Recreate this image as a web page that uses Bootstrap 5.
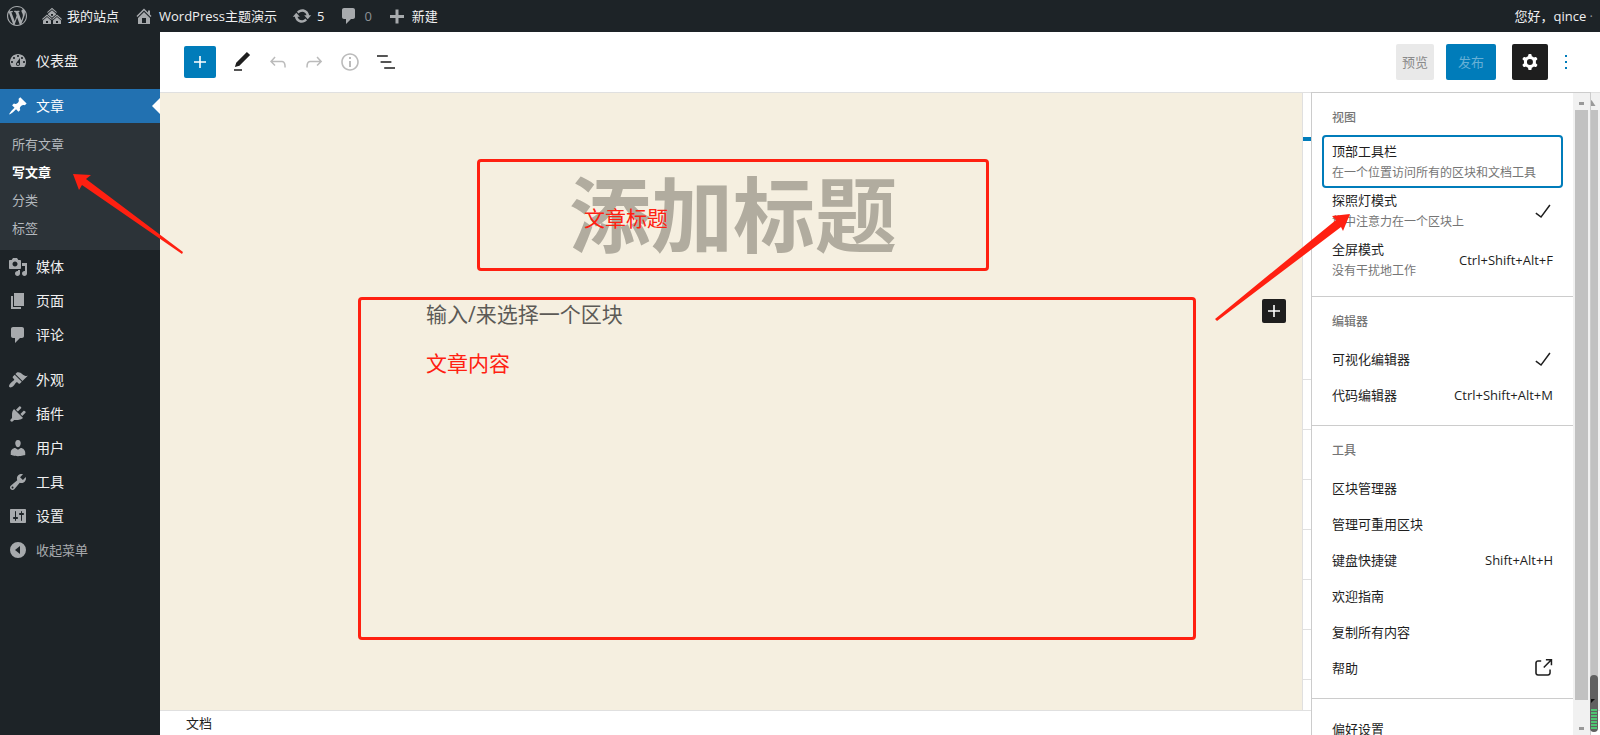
<!DOCTYPE html>
<html lang="zh-CN">
<head>
<meta charset="utf-8">
<meta name="viewport" content="width=device-width, initial-scale=1">
<title>写文章 ‹ WordPress主题演示</title>
<link rel="stylesheet" href="https://cdn.jsdelivr.net/npm/bootstrap@5.3.0/dist/css/bootstrap.min.css">
<style>
  :root { --wp-blue: #007cba; --ink: #1e1e1e; --bar: #1d2327; --canvas: #f5efe0; --red: #ff2011; }
  body { font: 13px/20px "Open Sans", "Noto Sans CJK SC", sans-serif; color: var(--ink); overflow: hidden; }
  a { color: inherit; text-decoration: none; }
  button, input { font: inherit; color: inherit; border: 0; background: none; padding: 0; }
  svg { fill: currentColor; flex: none; display: block; }
  .admin-bar { height: 32px; background: var(--bar); color: #f0f0f1; padding: 0 7px; }
  .admin-bar svg { color: #a7aaad; }
  .bar-item { display: flex; align-items: center; gap: 5px; margin-left: 15px; }
  .dim { color: #8c9196; }
  .admin-menu { width: 160px; background: var(--bar); color: #f0f0f1; padding-top: 12px; font-size: 14px; }
  .menu-row { height: 34px; padding-left: 8px; gap: 8px; }
  .menu-row svg { color: #a7aaad; }
  .menu-gap { height: 11px; }
  .menu-row.current { background: #2271b1; color: #fff; }
  .menu-row.current svg { color: #fff; }
  .menu-row.current::after { content: ""; position: absolute; right: 0; top: 9px; border: 8px solid transparent; border-left: 0; border-right-color: #fff; }
  .menu-row.collapse-row { font-size: 13px; color: #a7aaad; }
  .submenu { background: #2c3338; padding: 7px 12px 8px; font-size: 13px; line-height: 28px; color: #b4b9be; }
  .editor-head { height: 61px; border-bottom: 1px solid #e0e0e0; padding: 0 22px 0 24px; }
  .inserter { width: 32px; height: 32px; background: var(--wp-blue); color: #fff; border-radius: 2px; }
  .tool-btn { width: 36px; height: 36px; border-radius: 2px; }
  .tool-btn:disabled { color: #bbb; }
  .tool-btn.pressed { background: var(--ink); color: #fff; }
  .btn-preview { width: 38px; height: 36px; background: #e9e9e9; color: #8a8a8a; border-radius: 2px; }
  .btn-publish { width: 50px; height: 36px; margin: 0 16px 0 12px; background: var(--wp-blue); color: #66b0d6; border-radius: 2px; }
  .btn-more { color: var(--wp-blue); margin-left: 6px; }
  .fill-rest { min-width: 0; min-height: 0; }
  .canvas { background: var(--canvas); padding: 66px 0 0 4px; }
  .marked { border: 3px solid var(--red); border-radius: 4px; }
  .title-mark { width: 512px; height: 112px; }
  .title-input { font-size: 82px; font-weight: 700; line-height: 104px; height: 104px; }
  .title-input::placeholder { color: #b1ac9f; opacity: 1; }
  .note { color: var(--red); font-size: 21px; line-height: 28px; }
  .title-note { left: 104px; top: 42px; }
  .body-mark { height: 343px; margin: 26px 106px 0 194px; padding-left: 65px; }
  .body-input { font-size: 21px; line-height: 28px; height: 28px; }
  .body-input::placeholder { color: #5c5a56; opacity: 1; }
  .body-note { margin-top: 21px; }
  .side-inserter { width: 24px; height: 24px; right: 16px; top: 206px; background: var(--ink); color: #fff; border-radius: 2px; }
  .settings { width: 298px; border-left: 1px solid #e0e0e0; }
  .settings-tab { height: 48px; border-bottom: 4px solid var(--wp-blue); }
  .settings-panel { height: 50px; border-bottom: 1px solid #e0e0e0; }
  .settings-panel.tall { height: 239px; }
  .editor-foot { height: 25px; border-top: 1px solid #e0e0e0; padding-left: 26px; }
  .options { right: 9px; top: 0; bottom: 0; width: 280px; margin-top: -1px; border: 1px solid #ccc; border-bottom: 0; background: #fff; }
  .options section { border-bottom: 1px solid #ccc; padding: 0 12px 12px; }
  .options section.last { padding-top: 12px; border: 0; }
  .options h2 { font-size: 12px; line-height: 20px; color: #757575; height: 44px; margin: 0; padding: 15px 8px 0; }
  .opt { height: 36px; padding: 0 8px; width: 100%; text-align: left; }
  .opt.two { height: 49px; }
  .opt small { display: block; font-size: 12px; color: #757575; margin-top: 2px; }
  .opt svg { margin-right: -2px; }
  .opt.focus { outline: 2px solid var(--wp-blue); border-radius: 2px; }
  .scroller { width: 17px; background: #f1f1f1; padding: 0 2px; }
  .scroller i { display: block; height: 17px; padding-top: 9px; }
  .scroller i::before { content: ""; display: block; margin: 0 auto; width: 5px; height: 3px; background: #999; }
  .scroller i.up::before { width: 8px; height: 6px; margin-top: -2px; clip-path: polygon(50% 0, 100% 100%, 0 100%); }
  .thumb { background: #c1c1c1; height: 97%; }
  .overlay-arrow { pointer-events: none; color: var(--red); z-index: 5; }
  .arrow-menu { left: 73px; top: 174px; }
  .arrow-option { right: 249px; top: 214px; }
  .meter { right: 2px; bottom: 3px; width: 8px; height: 57px; border-radius: 4px; background: #606060; z-index: 6; overflow: hidden; }
  .meter::after { content: ""; position: absolute; inset: 34px 1px 2px; background: repeating-linear-gradient(#4fc473 0 2px, #606060 2px 3px); }
  .meter::before { content: ""; position: absolute; left: 1px; top: 24px; border: 2px solid transparent; border-top-color: #111; border-left-color: #111; }
</style>
</head>
<body class="vh-100 d-flex flex-column position-relative">
<header class="admin-bar d-flex align-items-center flex-shrink-0">
  <a href="#" aria-label="WordPress"><svg width="20" height="20" viewBox="0 0 20 20"><path d="M20 10c0-5.510-4.490-10-10-10C4.480 0 0 4.490 0 10c0 5.520 4.480 10 10 10 5.510 0 10-4.480 10-10zM7.780 15.370L4.370 6.220c.55-.02 1.170-.08 1.170-.08.5-.06.44-1.130-.06-1.110 0 0-1.450.11-2.370.11-.18 0-.37 0-.58-.01C4.120 2.690 6.870 1.110 10 1.110c2.330 0 4.450.87 6.050 2.340-.68-.11-1.650.39-1.650 1.580 0 .74.45 1.360.9 2.100.35.61.55 1.360.55 2.460 0 1.490-1.400 5-1.400 5l-3.030-8.370c.54-.02.82-.17.82-.17.5-.05.44-1.250-.06-1.220 0 0-1.440.12-2.380.12-.87 0-2.330-.12-2.330-.12-.5-.03-.56 1.200-.06 1.220l.92.08 1.260 3.410zM17.410 10c.24-.64.74-1.870.43-4.250.7 1.290 1.050 2.710 1.050 4.250 0 3.290-1.730 6.240-4.400 7.780.97-2.590 1.940-5.200 2.920-7.780zM6.100 18.090C3.120 16.650 1.110 13.530 1.110 10c0-1.300.23-2.480.72-3.590C3.250 10.300 4.670 14.200 6.100 18.090zm4.030-6.630l2.580 6.980c-.86.29-1.760.45-2.710.45-.79 0-1.570-.11-2.290-.33.81-2.380 1.620-4.740 2.420-7.100z"/></svg></a>
  <a href="#" class="bar-item"><svg width="20" height="20" viewBox="0 0 20 20"><path d="M14.270 6.870L10 3.140 5.730 6.870 5 6.140l5-4.380 5 4.380zM14 8.420l-4.050 3.430L6 8.380v-.74l4-3.500 4 3.500v.78zM11 9.700V8H9v1.700h2zm-1.730 4.030L5 10 .73 13.730 0 13l5-4.380L10 13zm10 0L15 10l-4.270 3.730L10 13l5-4.380L20 13zM5 11l4 3.500V18H1v-3.500zm10 0l4 3.500V18h-8v-3.500zm-9 6v-2H4v2h2zm10 0v-2h-2v2h2z"/></svg>我的站点</a>
  <a href="#" class="bar-item"><svg width="20" height="20" viewBox="0 0 20 20"><path d="M16 8.500l1.530 1.530-1.060 1.060L10 4.600l-6.470 6.490-1.060-1.060L10 2.500l4 4v-2h2v4zm-6-2.460l6 5.990V18H4v-5.970zM12 17v-5H8v5h4z"/></svg>WordPress主题演示</a>
  <a href="#" class="bar-item"><svg width="20" height="20" viewBox="0 0 20 20"><path d="M10.200 3.280c3.530 0 6.430 2.610 6.920 6h2.080l-3.500 4-3.500-4h2.320c-.45-1.970-2.210-3.450-4.320-3.450-1.450 0-2.730.71-3.540 1.780L4.950 5.660C6.230 4.200 8.110 3.280 10.200 3.280zm-.4 13.440c-3.520 0-6.430-2.610-6.920-6H.8l3.500-4c1.170 1.330 2.330 2.670 3.500 4H5.480c.45 1.970 2.210 3.450 4.320 3.450 1.450 0 2.730-.71 3.540-1.780l1.710 1.950c-1.280 1.460-3.150 2.380-5.250 2.380z"/></svg>5</a>
  <a href="#" class="bar-item dim"><svg width="20" height="20" viewBox="0 0 20 20"><path d="M5 2h9c1.100 0 2 .9 2 2v7c0 1.100-.9 2-2 2h-2l-5 5v-5H5c-1.100 0-2-.9-2-2V4c0-1.100.9-2 2-2z"/></svg>0</a>
  <a href="#" class="bar-item"><svg width="20" height="20" viewBox="0 0 20 20"><path d="M17 9v3h-5.500v5.500h-3V12H3V9h5.500V3.500h3V9z"/></svg>新建</a>
  <a href="#" class="ms-auto">您好，qince <span class="dim">·</span></a>
</header>

<div class="d-flex flex-grow-1 fill-rest">
  <nav class="admin-menu flex-shrink-0" aria-label="主菜单">
    <a href="#" class="menu-row d-flex align-items-center"><svg width="20" height="20" viewBox="0 0 20 20"><path d="M3.760 16h12.480c1.100-1.370 1.760-3.110 1.760-5 0-4.420-3.580-8-8-8s-8 3.580-8 8c0 1.890.66 3.630 1.760 5zM10 4c.55 0 1 .45 1 1s-.45 1-1 1-1-.45-1-1 .45-1 1-1zM6 6c.55 0 1 .45 1 1s-.45 1-1 1-1-.45-1-1 .45-1 1-1zm8 0c.55 0 1 .45 1 1s-.45 1-1 1-1-.45-1-1 .45-1 1-1zm-5.370 5.550L12 7v6c0 1.100-.9 2-2 2s-2-.9-2-2c0-.57.24-1.080.63-1.450zM4 10c.55 0 1 .45 1 1s-.45 1-1 1-1-.45-1-1 .45-1 1-1zm12 0c.55 0 1 .45 1 1s-.45 1-1 1-1-.45-1-1 .45-1 1-1zm-5 3c0-.55-.45-1-1-1s-1 .45-1 1 .45 1 1 1 1-.45 1-1z"/></svg>仪表盘</a>
    <div class="menu-gap"></div>
    <a href="#" class="menu-row current position-relative d-flex align-items-center"><svg width="20" height="20" viewBox="0 0 20 20"><path d="M10.440 3.020l1.820-1.820 6.360 6.350-1.830 1.820c-1.050-.68-2.480-.57-3.410.36l-.75.75c-.92.93-1.040 2.350-.35 3.410l-1.830 1.820-2.410-2.410-2.800 2.790c-.42.42-3.380 2.710-3.800 2.290s1.860-3.390 2.280-3.810l2.790-2.790L4.100 9.360l1.830-1.820c1.050.69 2.480.57 3.400-.36l.75-.75c.93-.92 1.050-2.350.36-3.410z"/></svg>文章</a>
    <div class="submenu d-flex flex-column">
      <a href="#">所有文章</a><a href="#" class="fw-bold text-white">写文章</a><a href="#">分类</a><a href="#">标签</a>
    </div>
    <a href="#" class="menu-row d-flex align-items-center"><svg width="20" height="20" viewBox="0 0 20 20"><path d="M13 11V4c0-.55-.45-1-1-1h-1.670L9 1H5L3.670 3H2c-.55 0-1 .45-1 1v7c0 .55.45 1 1 1h10c.55 0 1-.45 1-1zM7 4.500c1.380 0 2.500 1.120 2.500 2.500S8.380 9.500 7 9.500 4.500 8.380 4.500 7 5.620 4.500 7 4.500zM14 6h5v10.500c0 1.380-1.120 2.500-2.500 2.500S14 17.880 14 16.500s1.120-2.500 2.500-2.500c.17 0 .34.02.5.05V9h-3V6zm-4 8.050V13h2v3.500c0 1.380-1.120 2.500-2.500 2.500S7 17.880 7 16.500 8.120 14 9.500 14c.17 0 .34.02.5.05z"/></svg>媒体</a>
    <a href="#" class="menu-row d-flex align-items-center"><svg width="20" height="20" viewBox="0 0 20 20"><path d="M6 15V2h10v13H6zm-1 1h8v2H3V5h2v11z"/></svg>页面</a>
    <a href="#" class="menu-row d-flex align-items-center"><svg width="20" height="20" viewBox="0 0 20 20"><path d="M5 2h9c1.100 0 2 .9 2 2v7c0 1.100-.9 2-2 2h-2l-5 5v-5H5c-1.100 0-2-.9-2-2V4c0-1.100.9-2 2-2z"/></svg>评论</a>
    <div class="menu-gap"></div>
    <a href="#" class="menu-row d-flex align-items-center"><svg width="20" height="20" viewBox="0 0 20 20"><path d="M14.480 11.060L7.410 3.990l1.500-1.500c.5-.56 2.300-.47 3.510.32 1.210.8 1.430 1.280 2.910 2.100 1.180.64 2.450 1.260 4.450.85zm-.71.71L6.700 4.700 4.930 6.470c-.39.39-.39 1.020 0 1.410l1.060 1.060c.39.39.39 1.030 0 1.420-.6.6-1.430 1.110-2.210 1.690-.35.26-.7.53-1.010.84C1.430 14.230.4 16.080 1.400 17.070c.99 1 2.840-.03 4.180-1.360.31-.31.58-.66.85-1.020.57-.78 1.080-1.610 1.690-2.210.39-.39 1.020-.39 1.410 0l1.060 1.060c.39.39 1.020.39 1.410 0z"/></svg>外观</a>
    <a href="#" class="menu-row d-flex align-items-center"><svg width="20" height="20" viewBox="0 0 20 20"><path d="M13.110 4.360L9.870 7.600 8 5.730l3.240-3.240c.35-.34 1.050-.2 1.560.32.52.51.66 1.210.31 1.550zm-8 1.770l.91-1.120 9.010 9.010-1.190.84c-.71.71-2.630 1.160-3.820 1.160H6.140L4.900 17.260c-.59.59-1.540.59-2.120 0-.59-.58-.59-1.530 0-2.120l1.240-1.240v-3.880c0-1.130.4-3.190 1.090-3.890zm7.260 3.970l3.240-3.240c.34-.35 1.040-.21 1.550.31.52.51.66 1.210.31 1.550l-3.240 3.250z"/></svg>插件</a>
    <a href="#" class="menu-row d-flex align-items-center"><svg width="20" height="20" viewBox="0 0 20 20"><path d="M10 9.250c-2.270 0-2.730-3.440-2.730-3.440C7 4.020 7.820 2 9.970 2c2.160 0 2.980 2.020 2.710 3.810 0 0-.41 3.440-2.680 3.440zm0 2.570L12.720 10c2.390 0 4.520 2.330 4.520 4.530v2.490s-3.650 1.130-7.240 1.130c-3.650 0-7.240-1.130-7.240-1.130v-2.490c0-2.250 1.940-4.480 4.470-4.480z"/></svg>用户</a>
    <a href="#" class="menu-row d-flex align-items-center"><svg width="20" height="20" viewBox="0 0 20 20"><path d="M16.680 9.770c-1.340 1.340-3.300 1.670-4.950.99l-5.410 6.520c-.99.99-2.590.99-3.580 0s-.99-2.590 0-3.570l6.520-5.420c-.68-1.650-.35-3.610.99-4.950 1.280-1.280 3.120-1.620 4.720-1.060l-2.890 2.890 2.820 2.820 2.860-2.870c.53 1.580.18 3.390-1.080 4.650zM3.810 16.210c.4.39 1.040.39 1.430 0 .4-.4.4-1.040 0-1.430-.39-.4-1.030-.4-1.430 0-.39.39-.39 1.030 0 1.430z"/></svg>工具</a>
    <a href="#" class="menu-row d-flex align-items-center"><svg width="20" height="20" viewBox="0 0 20 20"><path d="M18 16V4c0-.55-.45-1-1-1H3c-.55 0-1 .45-1 1v12c0 .55.45 1 1 1h14c.55 0 1-.45 1-1zM8 11h1c.55 0 1 .45 1 1s-.45 1-1 1H8v1.500c0 .28-.22.5-.5.5s-.5-.22-.5-.5V13H6c-.55 0-1-.45-1-1s.45-1 1-1h1V5.500c0-.28.22-.5.5-.5s.5.22.5.5V11zm5-2h-1c-.55 0-1-.45-1-1s.45-1 1-1h1V5.500c0-.28.22-.5.5-.5s.5.22.5.5V7h1c.55 0 1 .45 1 1s-.45 1-1 1h-1v5.500c0 .28-.22.5-.5.5s-.5-.22-.5-.5V9z"/></svg>设置</a>
    <button type="button" class="menu-row collapse-row d-flex align-items-center"><svg width="20" height="20" viewBox="0 0 20 20"><path fill-rule="evenodd" d="M10 2a8 8 0 1 0 0 16 8 8 0 0 0 0-16zm2 12-5-4 5-4z"/></svg>收起菜单</button>
  </nav>

  <div class="d-flex flex-column flex-grow-1 bg-white fill-rest">
    <div class="editor-head d-flex align-items-center flex-shrink-0">
      <button type="button" class="inserter d-flex align-items-center justify-content-center me-2" aria-label="添加区块"><svg width="24" height="24" viewBox="0 0 24 24"><path d="M18 11.200h-5.200V6h-1.600v5.200H6v1.600h5.200V18h1.600v-5.200H18z"/></svg></button>
      <button type="button" class="tool-btn d-flex align-items-center justify-content-center" aria-label="编辑"><svg width="24" height="24" viewBox="0 0 24 24"><path d="M20.100 5.100L16.900 2 6.200 12.700l-1.300 4.400 4.500-1.300L20.100 5.100zM4 20.800h8v-1.500H4v1.500z"/></svg></button>
      <button type="button" disabled class="tool-btn d-flex align-items-center justify-content-center" aria-label="撤销"><svg width="24" height="24" viewBox="0 0 24 24"><path d="M18.300 11.700c-.6-.6-1.400-.9-2.300-.9H6.700l2.900-3.300-1.100-1-4.500 5L8.500 16l1-1-2.700-2.700H16c.5 0 .9.2 1.300.5 1 1 1 3.400 1 4.500v.3h1.500v-.2c0-1.500 0-4.300-1.500-5.700z"/></svg></button>
      <button type="button" disabled class="tool-btn d-flex align-items-center justify-content-center" aria-label="重做"><svg width="24" height="24" viewBox="0 0 24 24"><path d="M15.600 6.500l-1.100 1 2.900 3.300H8c-.9 0-1.700.3-2.300.9-1.400 1.500-1.400 4.200-1.400 5.600v.2h1.500v-.3c0-1.100 0-3.500 1-4.500.3-.3.7-.5 1.300-.5h9.200L14.500 15l1.100 1.100 4.600-4.600-4.600-5z"/></svg></button>
      <button type="button" disabled class="tool-btn d-flex align-items-center justify-content-center" aria-label="详情"><svg width="24" height="24" viewBox="0 0 24 24"><path d="M12 3.200c-4.800 0-8.800 3.900-8.800 8.800 0 4.800 3.900 8.800 8.800 8.800 4.800 0 8.800-3.900 8.800-8.800 0-4.800-4-8.800-8.800-8.800zm0 16c-4 0-7.200-3.300-7.200-7.200C4.800 8 8 4.800 12 4.800s7.200 3.300 7.200 7.200c0 4-3.200 7.200-7.200 7.200zM11 17h2v-6h-2v6zm0-8h2V7h-2v2z"/></svg></button>
      <button type="button" class="tool-btn d-flex align-items-center justify-content-center" aria-label="列表视图"><svg width="24" height="24" viewBox="0 0 24 24"><path d="M13.800 5.200H3v1.500h10.800V5.200zm-3.600 12v1.500H21v-1.500H10.200zm7.200-6H6.600v1.500h10.800v-1.500z"/></svg></button>
      <button type="button" class="btn-preview ms-auto">预览</button>
      <button type="button" class="btn-publish">发布</button>
      <button type="button" class="tool-btn pressed d-flex align-items-center justify-content-center" aria-label="设置"><svg width="24" height="24" viewBox="0 0 24 24"><path fill-rule="evenodd" d="M10.289 4.836A1 1 0 0111.275 4h1.306a1 1 0 01.987.836l.244 1.466c.787.26 1.503.679 2.108 1.218l1.393-.522a1 1 0 011.216.437l.653 1.130a1 1 0 01-.23 1.273l-1.148.944a6.025 6.025 0 010 2.435l1.149.946a1 1 0 01.23 1.272l-.653 1.130a1 1 0 01-1.216.437l-1.394-.522c-.605.54-1.320.958-2.108 1.218l-.244 1.466a1 1 0 01-.987.836h-1.306a1 1 0 01-.986-.836l-.244-1.466a5.995 5.995 0 01-2.108-1.218l-1.394.522a1 1 0 01-1.217-.436l-.653-1.131a1 1 0 01.23-1.272l1.149-.946a6.026 6.026 0 010-2.435l-1.148-.944a1 1 0 01-.23-1.272l.653-1.131a1 1 0 011.217-.437l1.393.522a5.994 5.994 0 012.108-1.218l.244-1.466zM14.929 12a3 3 0 11-6 0 3 3 0 016 0z"/></svg></button>
      <button type="button" class="btn-more" aria-label="选项"><svg width="24" height="24" viewBox="0 0 24 24"><path d="M11 5h2v2h-2zM11 11h2v2h-2zM11 17h2v2h-2z"/></svg></button>
    </div>

    <div class="position-relative d-flex flex-column flex-grow-1 fill-rest">
      <div class="d-flex flex-grow-1 fill-rest">
        <main class="canvas position-relative flex-grow-1 overflow-hidden">
          <div class="marked title-mark position-relative mx-auto">
            <input class="title-input w-100 text-center" type="text" placeholder="添加标题" aria-label="添加标题">
            <span class="note title-note position-absolute">文章标题</span>
          </div>
          <div class="marked body-mark">
            <input class="body-input w-75 d-block" type="text" placeholder="输入/来选择一个区块" aria-label="区块">
            <div class="note body-note">文章内容</div>
          </div>
          <button type="button" class="side-inserter position-absolute" aria-label="添加区块"><svg width="24" height="24" viewBox="0 0 24 24"><path d="M18 11.200h-5.200V6h-1.600v5.200H6v1.600h5.200V18h1.600v-5.200H18z"/></svg></button>
        </main>
        <aside class="settings d-flex flex-shrink-0 overflow-hidden" aria-label="文章设置">
          <div class="flex-grow-1">
            <div class="settings-tab"></div><div class="settings-panel tall"></div>
            <div class="settings-panel"></div><div class="settings-panel"></div><div class="settings-panel"></div>
            <div class="settings-panel"></div><div class="settings-panel"></div><div class="settings-panel"></div>
          </div>
          <div class="scroller"><i class="up"></i><div class="thumb"></div></div>
        </aside>
      </div>
      <footer class="editor-foot flex-shrink-0 d-flex align-items-center">文档</footer>

      <div class="options position-absolute d-flex overflow-hidden" role="menu" aria-label="选项">
        <div class="flex-grow-1">
          <section>
            <h2>视图</h2>
            <button type="button" class="opt two focus">顶部工具栏<small>在一个位置访问所有的区块和文档工具</small></button>
            <button type="button" class="opt two d-flex align-items-center justify-content-between"><span>探照灯模式<small>集中注意力在一个区块上</small></span><svg width="24" height="24" viewBox="0 0 24 24"><path d="M18.300 5.600L9.900 16.900l-4.600-3.400-.9 1.200 5.800 4.300 9.300-12.600z"/></svg></button>
            <button type="button" class="opt two d-flex align-items-center justify-content-between"><span>全屏模式<small>没有干扰地工作</small></span><span>Ctrl+Shift+Alt+F</span></button>
          </section>
          <section>
            <h2>编辑器</h2>
            <button type="button" class="opt d-flex align-items-center justify-content-between"><span>可视化编辑器</span><svg width="24" height="24" viewBox="0 0 24 24"><path d="M18.300 5.600L9.900 16.900l-4.600-3.400-.9 1.200 5.800 4.300 9.300-12.600z"/></svg></button>
            <button type="button" class="opt d-flex align-items-center justify-content-between"><span>代码编辑器</span><span>Ctrl+Shift+Alt+M</span></button>
          </section>
          <section>
            <h2>工具</h2>
            <a href="#" class="opt d-flex align-items-center">区块管理器</a>
            <a href="#" class="opt d-flex align-items-center">管理可重用区块</a>
            <button type="button" class="opt d-flex align-items-center justify-content-between"><span>键盘快捷键</span><span>Shift+Alt+H</span></button>
            <button type="button" class="opt d-flex align-items-center">欢迎指南</button>
            <button type="button" class="opt d-flex align-items-center">复制所有内容</button>
            <a href="#" class="opt d-flex align-items-center justify-content-between"><span>帮助</span><svg width="24" height="24" viewBox="0 0 24 24"><path d="M18.200 17c0 .7-.6 1.200-1.200 1.200H7c-.7 0-1.200-.6-1.200-1.200V7c0-.7.6-1.200 1.200-1.200h3.200V4.200H7C5.500 4.200 4.200 5.500 4.200 7v10c0 1.500 1.200 2.800 2.800 2.800h10c1.500 0 2.800-1.200 2.800-2.800v-3.600h-1.500V17zM14.900 3v1.500h3.700l-6.400 6.400 1.100 1.100 6.400-6.400v3.700h1.500V3h-6.300z"/></svg></a>
          </section>
          <section class="last"><button type="button" class="opt d-flex align-items-center">偏好设置</button></section>
        </div>
        <div class="scroller d-flex flex-column"><i></i><div class="flex-grow-1"><div class="thumb"></div></div><i></i></div>
      </div>
    </div>
  </div>
</div>

<svg class="overlay-arrow arrow-menu position-absolute" width="111" height="81" viewBox="0 0 111 81"><path d="M0 0 18 1 13 5 110 78 109 80 9 11 6 16z"/></svg>
<svg class="overlay-arrow arrow-option position-absolute" width="136" height="108" viewBox="0 0 136 108"><path d="M135 0 117 2 121 6 0 105 2 107 126 13 128 17z"/></svg>
<div class="meter position-absolute"></div>
<script src="https://cdn.jsdelivr.net/npm/bootstrap@5.3.0/dist/js/bootstrap.bundle.min.js"></script>
</body>
</html>
